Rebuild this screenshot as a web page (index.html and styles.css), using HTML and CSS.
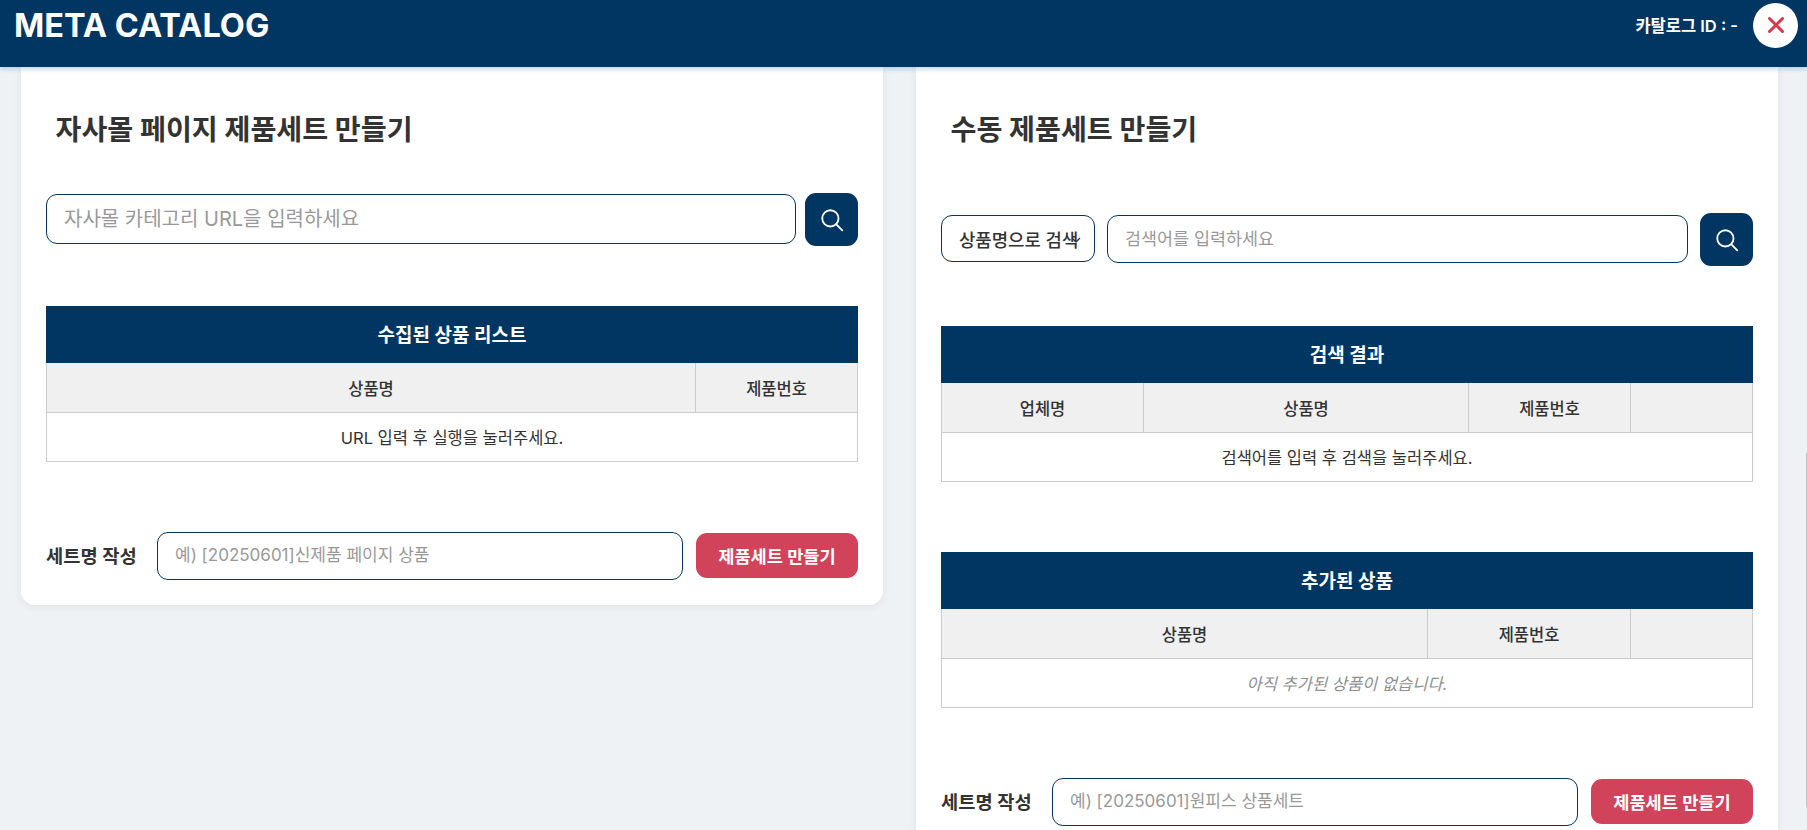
FILE: index.html
```html
<!DOCTYPE html>
<html lang="ko">
<head>
<meta charset="utf-8">
<title>META CATALOG</title>
<link rel="stylesheet" href="styles.css">
</head>
<body>
<header class="topbar">
  <h1 class="brand">META CATALOG</h1>
  <div class="topbar-right">
    <span class="catalog-id">카탈로그 ID : -</span>
    <button class="close-btn" type="button" aria-label="닫기">
      <svg viewBox="0 0 24 24" width="24" height="24"><path d="M5.500 5.500 18.500 18.500M18.500 5.500 5.500 18.500" fill="none" stroke="#dc3545" stroke-width="3" stroke-linecap="round"/></svg>
    </button>
  </div>
</header>
<main class="board">
  <section class="card">
    <h2 class="card-title">자사몰 페이지 제품세트 만들기</h2>
    <div class="search-row search-row-left">
      <input class="field field-url" type="text" placeholder="자사몰 카테고리 URL을 입력하세요">
      <button class="icon-btn" type="button" aria-label="검색">
        <svg viewBox="0 0 24 24" width="26" height="26"><circle cx="10.500" cy="10.500" r="7.500" fill="none" stroke="#fff" stroke-width="1.700"/><path d="m16 16 5.500 5.500" stroke="#fff" stroke-width="1.700" stroke-linecap="round"/></svg>
      </button>
    </div>
    <table class="grid grid-collected">
      <colgroup><col class="c-name-a"><col></colgroup>
      <thead>
        <tr><th class="grid-title" colspan="2">수집된 상품 리스트</th></tr>
        <tr><th>상품명</th><th>제품번호</th></tr>
      </thead>
      <tbody><tr><td colspan="2">URL 입력 후 실행을 눌러주세요.</td></tr></tbody>
    </table>
    <div class="set-row set-row-left">
      <label class="set-label">세트명 작성</label>
      <input class="field field-set" type="text" placeholder="예) [20250601]신제품 페이지 상품">
      <button class="make-btn" type="button">제품세트 만들기</button>
    </div>
  </section>

  <section class="card card-right">
    <h2 class="card-title">수동 제품세트 만들기</h2>
    <div class="search-row search-row-right">
      <div class="picker">
        <span>상품명으로 검색</span>
        <svg class="picker-arrow" viewBox="0 0 10 10" width="10" height="10"><path d="M1 3 5 7 9 3" fill="none" stroke="#333" stroke-width="1.300"/></svg>
      </div>
      <input class="field field-query" type="text" placeholder="검색어를 입력하세요">
      <button class="icon-btn" type="button" aria-label="검색">
        <svg viewBox="0 0 24 24" width="26" height="26"><circle cx="10.500" cy="10.500" r="7.500" fill="none" stroke="#fff" stroke-width="1.700"/><path d="m16 16 5.500 5.500" stroke="#fff" stroke-width="1.700" stroke-linecap="round"/></svg>
      </button>
    </div>
    <table class="grid grid-results">
      <colgroup><col class="c-vendor"><col class="c-name-b"><col class="c-no-b"><col></colgroup>
      <thead>
        <tr><th class="grid-title" colspan="4">검색 결과</th></tr>
        <tr><th>업체명</th><th>상품명</th><th>제품번호</th><th></th></tr>
      </thead>
      <tbody><tr><td colspan="4">검색어를 입력 후 검색을 눌러주세요.</td></tr></tbody>
    </table>
    <table class="grid grid-added">
      <colgroup><col class="c-name-c"><col class="c-no-c"><col></colgroup>
      <thead>
        <tr><th class="grid-title" colspan="3">추가된 상품</th></tr>
        <tr><th>상품명</th><th>제품번호</th><th></th></tr>
      </thead>
      <tbody><tr><td class="empty" colspan="3">아직 추가된 상품이 없습니다.</td></tr></tbody>
    </table>
    <div class="set-row set-row-right">
      <label class="set-label">세트명 작성</label>
      <input class="field field-set" type="text" placeholder="예) [20250601]원피스 상품세트">
      <button class="make-btn" type="button">제품세트 만들기</button>
    </div>
  </section>
</main>
<div class="edge-line"></div>
</body>
</html>
```

FILE: styles.css
```css
* { box-sizing: border-box; }
html, body { height: 100%; }
body {
  margin: 0;
  overflow: hidden;
  background: #eef2f5;
  color: #333;
  font-family: Inter, "Noto Sans CJK KR", sans-serif;
}
.topbar {
  position: relative;
  z-index: 2;
  height: 67px;
  display: flex;
  justify-content: space-between;
  align-items: flex-start;
  padding: 3px 9px 0 14px;
  background: #023662;
  color: #fff;
  box-shadow: 0 2px 5px rgba(0, 0, 0, .18);
}
.brand {
  margin: 1px 0 0;
  font-size: 32.500px;
  line-height: 44px;
  font-weight: 700;
}
.topbar-right { display: flex; align-items: center; gap: 15px; height: 44px; }
.catalog-id { font-size: 16.500px; font-weight: 600; }
.close-btn {
  width: 45px;
  height: 45px;
  padding: 0;
  border: 0;
  border-radius: 50%;
  background: #fff;
  display: flex;
  align-items: center;
  justify-content: center;
}
.board {
  display: grid;
  grid-template-columns: 862px 862px;
  column-gap: 33px;
  align-items: start;
  padding-left: 21px;
}
.card {
  background: #fff;
  padding: 43px 25px 25px;
  border-radius: 0 0 14px 14px;
  box-shadow: 0 2px 10px rgba(0, 0, 0, .06);
}
.card-right { min-height: 800px; }
.card-title {
  margin: 0;
  padding-left: 9.500px;
  font-size: 28.200px;
  line-height: 40px;
  font-weight: 700;
  color: #333;
}
.search-row { display: flex; align-items: center; }
.search-row-left { margin-top: 43px; gap: 9px; }
.search-row-right { margin-top: 63px; gap: 12px; }
.field {
  min-width: 0;
  flex: 1;
  border: 1px solid #023662;
  border-radius: 11px;
  background: #fff;
  padding: 0 17px;
  font-family: inherit;
  font-size: 16px;
  color: #333;
  outline: none;
}
.field::placeholder { color: #999; opacity: 1; }
.field-url { height: 50px; margin-bottom: 2px; font-size: 20px; }
.field-query { height: 48px; margin-bottom: 2px; font-size: 17.400px; }
.field-set { height: 48px; padding-bottom: 3px; font-size: 17px; }
.icon-btn {
  flex: none;
  width: 53px;
  height: 53px;
  padding: 0;
  border: 0;
  border-radius: 11px;
  background: #023662;
  display: flex;
  align-items: center;
  justify-content: center;
}
.picker {
  position: relative;
  flex: none;
  width: 154px;
  height: 47px;
  display: flex;
  align-items: center;
  margin-bottom: 2px;
  padding-left: 17px;
  border: 1px solid #023662;
  border-radius: 11px;
  font-size: 17.800px;
  font-weight: 500;
  white-space: nowrap;
}
.picker-arrow { position: absolute; right: 13px; top: 19px; }
.grid {
  width: 100%;
  border-collapse: collapse;
  table-layout: fixed;
  font-size: 16.500px;
}
.grid th, .grid td {
  height: 49px;
  padding: 0;
  border: 1px solid #ccc;
  text-align: center;
  color: #333;
}
.grid th { height: 50px; background: #f0f0f0; font-weight: 500; }
.grid .grid-title {
  height: 56px;
  padding-bottom: 2px;
  background: #023662;
  border-color: #023662;
  color: #fff;
  font-size: 19px;
  font-weight: 700;
}
.grid .empty { color: #909090; font-style: italic; }
.grid-collected { margin-top: 60px; }
.grid-results { margin-top: 60px; }
.grid-added { margin-top: 70px; }
.c-name-a { width: 649px; }
.c-vendor { width: 202px; }
.c-name-b { width: 325px; }
.c-no-b { width: 162px; }
.c-name-c { width: 486px; }
.c-no-c { width: 203px; }
.set-row { display: flex; align-items: center; }
.set-row-left { margin-top: 70px; }
.set-row-right { margin-top: 70px; }
.set-label {
  flex: none;
  width: 111px;
  padding-bottom: 3px;
  font-size: 18.700px;
  font-weight: 600;
  white-space: nowrap;
}
.make-btn {
  flex: none;
  width: 162px;
  height: 45px;
  margin-left: 13px;
  margin-bottom: 2px;
  border: 0;
  border-radius: 11px;
  background: #d1435b;
  color: #fff;
  font-family: inherit;
  font-size: 17.600px;
  font-weight: 700;
}
.edge-line {
  position: absolute;
  right: 0;
  top: 453px;
  width: 1px;
  height: 354px;
  background: #c4c4c4;
}
```
